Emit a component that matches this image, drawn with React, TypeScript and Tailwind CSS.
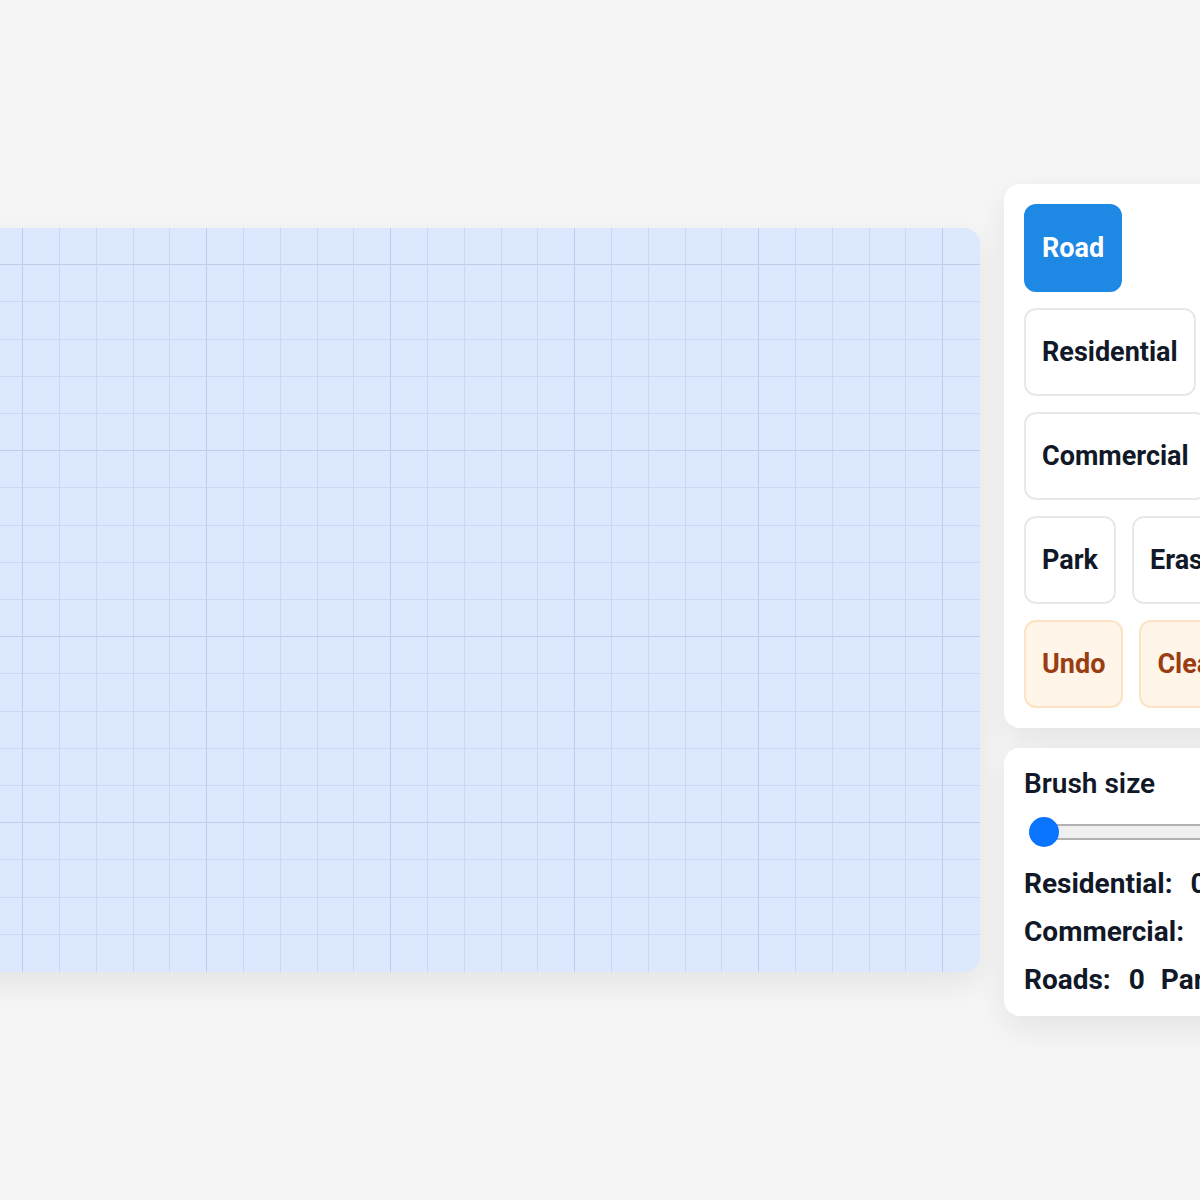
import React from 'react'

const COLS = 30
const ROWS = 20

type Tool = {
  label: string
  tone: 'active' | 'plain' | 'warn'
}

const toolRows: Tool[][] = [
  [{ label: 'Road', tone: 'active' }],
  [{ label: 'Residential', tone: 'plain' }],
  [{ label: 'Commercial', tone: 'plain' }],
  [
    { label: 'Park', tone: 'plain' },
    { label: 'Erase', tone: 'plain' },
  ],
  [
    { label: 'Undo', tone: 'warn' },
    { label: 'Clear', tone: 'warn' },
  ],
]

const toneClass: Record<Tool['tone'], string> = {
  active: 'bg-[#1e88e5] border-[#1e88e5] text-white',
  plain: 'bg-white border-[#e6e8eb] text-[#111827]',
  warn: 'bg-[#fff5e8] border-[#fce3c4] text-[#9a3d12]',
}

// every fifth grid line is drawn a shade darker
function Cell({ index }: { index: number }) {
  const row = Math.floor(index / COLS)
  const col = index % COLS
  const right =
    col === COLS - 1 ? '' : col % 5 === 3 ? 'border-r border-r-[#bfcde8]' : 'border-r border-r-[#cad8f0]'
  const bottom =
    row === ROWS - 1 ? '' : row % 5 === 0 ? 'border-b border-b-[#bfcde8]' : 'border-b border-b-[#cad8f0]'
  return <div className={`${right} ${bottom}`} />
}

function MapCanvas() {
  return (
    <div className="w-[1104px] h-[744px] shrink-0 rounded-2xl bg-[#dbe8fd] overflow-hidden shadow-[0_12px_32px_rgba(0,0,0,0.07)] grid grid-cols-30 grid-rows-20">
      {Array.from({ length: COLS * ROWS }, (_, i) => (
        <Cell key={i} index={i} />
      ))}
    </div>
  )
}

function ToolPanel() {
  return (
    <div className="bg-white rounded-2xl p-5 flex flex-col gap-4 shadow-[0_12px_32px_rgba(0,0,0,0.07)]">
      {toolRows.map((row, i) => (
        <div key={i} className="flex gap-4">
          {row.map((t) => (
            <button
              key={t.label}
              className={`h-[88px] px-4 rounded-xl border-2 text-[27px] font-bold leading-none whitespace-nowrap ${toneClass[t.tone]}`}
            >
              {t.label}
            </button>
          ))}
        </div>
      ))}
    </div>
  )
}

function StatsPanel() {
  return (
    <div className="bg-white rounded-2xl p-5 flex flex-col shadow-[0_12px_32px_rgba(0,0,0,0.07)] text-[#111827] text-[28px] leading-8">
      <div className="font-semibold">Brush size</div>
      <div className="relative h-8 mt-4 flex items-center">
        <div className="ml-3 flex-1 h-4 rounded-full border-2 border-[#b2b2b2] bg-[#efefef]" />
        <div className="absolute left-[5px] top-[1px] w-[30px] h-[30px] rounded-full bg-[#0a74ff]" />
      </div>
      <div className="mt-5 flex flex-col gap-4 font-bold whitespace-nowrap">
        <div>
          Residential:<span className="ml-[18px]">0</span>
        </div>
        <div>
          Commercial:<span className="ml-[18px]">0</span>
        </div>
        <div>
          Roads:<span className="ml-[18px]">0</span>
          <span className="ml-4">Parks:</span>
          <span className="ml-[18px]">0</span>
        </div>
      </div>
    </div>
  )
}

export default function App() {
  return (
    <div
      className="w-full h-[1200px] bg-[#f5f5f5] flex items-center justify-center overflow-hidden"
      style={{ fontFamily: "Roboto, 'Noto Sans', sans-serif" }}
    >
      <div className="flex items-center gap-6 shrink-0">
        <MapCanvas />
        <div className="w-[320px] shrink-0 flex flex-col gap-5">
          <ToolPanel />
          <StatsPanel />
        </div>
      </div>
    </div>
  )
}
